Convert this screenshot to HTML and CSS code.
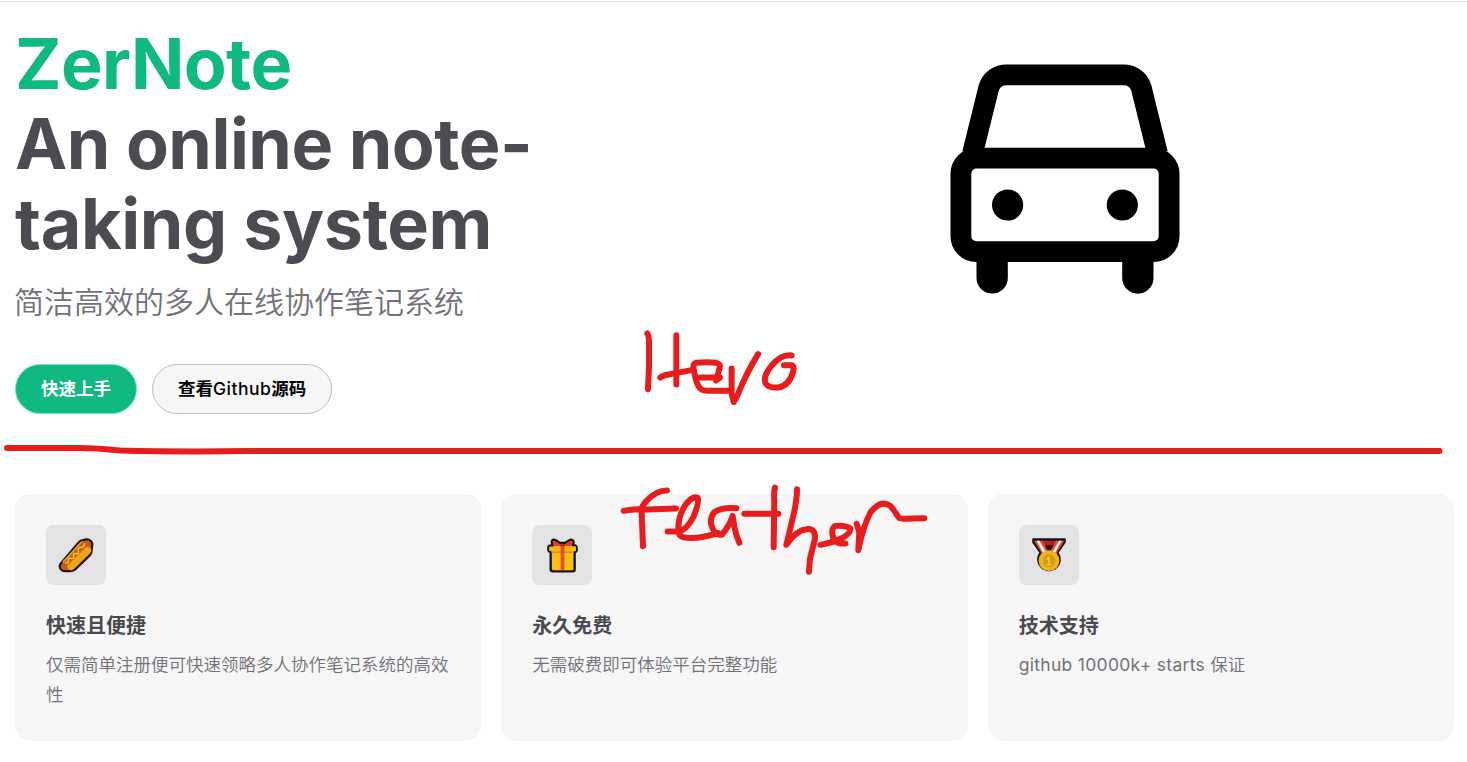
FILE: index.html
```html
<!DOCTYPE html>
<html lang="zh-CN">
<head>
<meta charset="utf-8">
<title>ZerNote</title>
<link rel="stylesheet" href="styles.css">
</head>
<body>
<main class="page">
  <section class="hero">
    <div class="intro">
      <h1 class="name"><span class="brand">ZerNote</span><br>An online note-<br><span class="last">taking system</span></h1>
      <p class="tagline">简洁高效的多人在线协作笔记系统</p>
      <div class="actions">
        <a class="button primary">快速上手</a>
        <a class="button secondary">查看<span class="github">Github</span>源码</a>
      </div>
    </div>
    <div class="visual">
      <svg class="car" viewBox="950 64 230 230" fill="none" stroke="#000" stroke-width="20.800">
        <rect x="960.900" y="158.200" width="208.200" height="93.500" rx="15.500"/>
        <path d="M972.500 153.500L988.700 88A18.500 18.500 0 0 1 1007 74.800H1123A18.500 18.500 0 0 1 1141.300 88L1157.500 153.500"/>
        <g fill="#000" stroke="none">
          <circle cx="1007.600" cy="205" r="15.600"/><circle cx="1122.300" cy="205" r="15.600"/>
          <path d="M976.500 255H1007.800V278A15.600 15.600 0 0 1 976.500 278ZM1122.200 255H1153.500V278A15.600 15.600 0 0 1 1122.200 278Z"/>
        </g>
      </svg>
    </div>
  </section>
  <section class="features">
    <article class="card">
      <div class="icon">
        <svg viewBox="18 30 180 180" stroke-linecap="round" stroke-linejoin="round">
          <path d="M61 147L115 83Q121 75 130 75Q143 70 152 77Q160 86 156 97L155 108Q156 114 150 121L105 164Q96 170 86 168Q72 171 63 164Q56 155 61 147Z" fill="#c95722" stroke="#151515" stroke-width="6"/>
          <path d="M66 141L121 81L130 79L71 143Z" fill="#e5a117"/>
          <path d="M93 155L143 106" stroke="#eba614" stroke-width="21"/>
          <path d="M77 144Q87 145 85 136Q84 127 94 130Q103 132 101 123Q98 113 108 116Q117 119 115 109Q112 99 122 97Q133 97 133 86" fill="none" stroke="#f6d52b" stroke-width="4"/>
        </svg>
      </div>
      <h2 class="title">快速且便捷</h2>
      <p class="details">仅需简单注册便可快速领略多人协作笔记系统的高效性</p>
    </article>
    <article class="card">
      <div class="icon">
        <svg viewBox="21 30 180 180" stroke-linejoin="round">
          <path d="M83 92L80 80Q82 72 91 75L105 84H120L134 75Q144 72 146 81L144 91H151Q155 92 155 98V107Q153 111 149 112V163Q149 169 143 169H84Q77 169 77 163V112Q71 110 70 105V96Q71 91 78 91Z" fill="#fbbd16" stroke="#151515" stroke-width="7"/>
          <path d="M73 95H153V108H73Z" fill="#fbb614"/>
          <path d="M80 109H146V114H80Z" fill="#dc9412"/>
          <path d="M84 93V79L89 78L105 88H121L135 78L141 80V93Z" fill="#e63b25"/>
          <path d="M107 90H118V166H107Z" fill="#ef4b26"/>
          <path d="M105 87H120V94H105Z" fill="#bd2a24"/>
        </svg>
      </div>
      <h2 class="title">永久免费</h2>
      <p class="details">无需破费即可体验平台完整功能</p>
    </article>
    <article class="card">
      <div class="icon">
        <svg viewBox="27 30 180 180" stroke-linejoin="round">
          <path d="M70 73H164V81L142 113A32 32 0 1 1 92 113L70 81Z" fill="#171717" stroke="#171717" stroke-width="7"/>
          <path d="M94 77H140L132 91H103Z" fill="#b51f2d"/>
          <path d="M72 77H97L117 113L99 121ZM138 77H163L136 121L118 113Z" fill="#f04a2b"/>
          <path d="M80 77H88L109 113L101 117ZM147 77H155L133 117L126 113Z" fill="#fff"/>
          <circle cx="117" cy="137" r="31" fill="#f4b414"/>
          <circle cx="117" cy="137" r="19" fill="#d89a16"/>
          <path d="M110 132L117 127V149M110 149H124" fill="none" stroke="#f8c732" stroke-width="5"/>
        </svg>
      </div>
      <h2 class="title">技术支持</h2>
      <p class="details"><span class="latin">github 10000k+ starts </span>保证</p>
    </article>
  </section>
</main>
<svg class="ink" viewBox="0 0 1467 762">
  <path class="divider" d="M7 448H80Q96 448 120 450.500Q180 452 250 451H1439.500"/>
  <g transform="translate(620 320.500) scale(.333333)">
    <path d="M82 39Q87 46 87 65V140L84 206M169 44V192M121 171Q130 163 150 161L215 149"/>
    <path d="M241 171H300L288 180L299 142Q303 130 289 127Q260 124 228 127Q215 130 223 155Q229 193 241 204Q247 210 260 211H325"/>
    <path d="M335 144V220L341 245L350 230Q378 160 414 101M515 105Q485 100 455 135Q426 170 438 190Q447 203 475 201Q508 195 519 155Q524 137 515 134H492"/>
  </g>
  <g transform="translate(610 475.500) scale(.333333)">
    <path d="M171 45Q140 44 111 75Q93 91 95 112L99 212M41 106Q70 99 110 102L198 99"/>
    <path d="M173 168H205Q229 165 250 125Q269 78 263 67Q247 60 225 90Q201 130 206 170Q207 186 230 187Q269 190 325 173"/>
    <path d="M379 98Q336 94 313 110Q296 132 307 157Q318 182 336 177Q359 150 368 121L373 153Q378 180 388 202M403 115H505M495 36Q491 48 493 75L491 215"/>
    <path d="M561 41Q561 70 552 112L529 208Q560 163 590 161Q617 157 615 190L600 250L597 289"/>
    <path d="M631 208Q666 202 692 190Q721 175 722 160Q710 150 682 151Q665 151 667 174Q670 207 706 204M740 145L748 170L745 224Q760 150 782 110Q813 70 842 92Q853 105 866 126Q870 130 883 130L943 128"/>
  </g>
</svg>
</body>
</html>
```
FILE: styles.css
```css
* { box-sizing: border-box; }
body {
  margin: 0;
  background: #fff;
  font-family: Inter, "Noto Sans CJK SC", sans-serif;
  overflow: hidden;
}
h1, h2, p { margin: 0; }
.page {
  height: 762px;
  margin-top: 1px;
  padding: 22px 13px 0 15px;
  border-top: 1px solid #e2e2e3;
}
.hero { display: flex; }
.intro { width: 660px; }
.name {
  font-size: 70px;
  line-height: 80px;
  font-weight: 700;
  letter-spacing: -0.5px;
  color: #4b4b51;
}
.brand { color: #10b981; letter-spacing: -0.6px; }
.last { letter-spacing: -0.35px; }
.tagline {
  margin-left: -1px;
  padding-top: 16px;
  font-size: 30px;
  line-height: 44px;
  font-weight: 350;
  color: #717176;
}
.actions { display: flex; gap: 15px; padding-top: 40px; }
.button {
  height: 50px;
  padding: 0 25px;
  border: 1px solid;
  border-radius: 25px;
  font-size: 17.5px;
  line-height: 48px;
  white-space: nowrap;
}
.primary { width: 122px; background: #10b981; border-color: #6ee7b7; color: #fff; font-weight: 700; }
.secondary { width: 180px; background: #f6f6f7; border-color: #bcbcbf; color: #000; font-weight: 600; }
.github { font-weight: 500; letter-spacing: 0.5px; }
.visual { flex: 1; padding: 40px 0 0 275px; }
.car { display: block; width: 230px; height: 230px; }
.features {
  display: grid;
  grid-template-columns: repeat(3, 1fr);
  gap: 20px;
  margin-top: 80px;
}
.card {
  height: 247px;
  padding: 31px;
  border-radius: 15px;
  background: #f6f6f7;
}
.icon {
  width: 60px;
  height: 60px;
  margin-bottom: 26px;
  border-radius: 7.5px;
  background: #e3e3e5;
}
.icon svg { display: block; width: 60px; height: 60px; }
.title { font-size: 20px; line-height: 30px; font-weight: 700; color: #49494e; }
.details {
  padding-top: 9px;
  font-size: 17.5px;
  line-height: 30px;
  font-weight: 350;
  color: #717176;
}
.latin { font-weight: 400; letter-spacing: 0.3px; }
.ink {
  position: absolute;
  top: 0;
  left: 0;
  width: 1467px;
  height: 762px;
  fill: none;
  stroke: #e81c1c;
  stroke-width: 18;
  stroke-linecap: round;
  stroke-linejoin: round;
  pointer-events: none;
}
.divider { stroke-width: 6; }
```
